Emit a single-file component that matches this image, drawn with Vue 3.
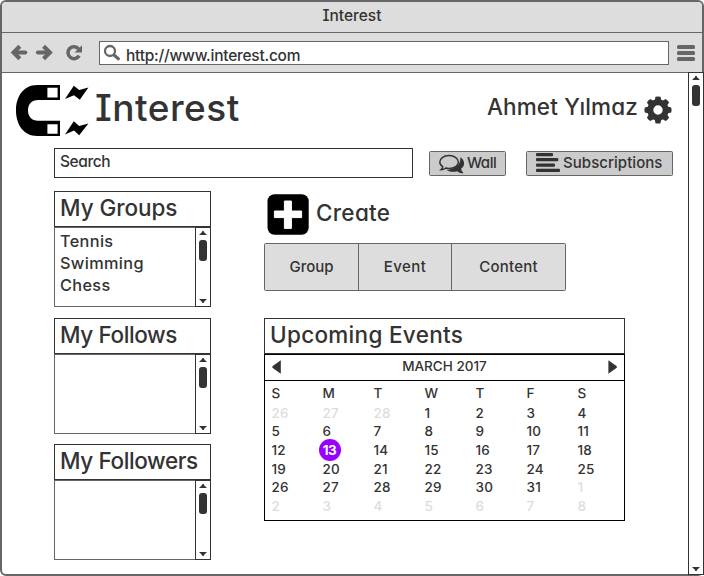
<script setup>
import { h } from 'vue'

const panels = [
  { title: 'My Groups', cls: 'groups', items: ['Tennis', 'Swimming', 'Chess'] },
  { title: 'My Follows', cls: 'follows', items: [] },
  { title: 'My Followers', cls: 'followers', items: [] },
]

const days = ['S', 'M', 'T', 'W', 'T', 'F', 'S']
const cells = [
  ...[26, 27, 28].map((n) => ({ n, out: true })),
  ...Array.from({ length: 31 }, (_, i) => ({ n: i + 1, today: i + 1 === 13 })),
  ...[1, 2, 3, 4, 5, 6, 7, 8].map((n) => ({ n, out: true })),
]

const teeth = [0, 45, 90, 135, 180, 225, 270, 315]

const arrow = (d) =>
  h('svg', { class: 'arrow', width: 8, height: 4, viewBox: '0 0 8 4' }, [h('path', { d, fill: '#333' })])
const ArrowUp = () => arrow('M0 4L2.8 1.2L3.4 0H4.6L5.2 1.2L8 4Z')
const ArrowDown = () => arrow('M0 0L2.8 2.8L3.4 4H4.6L5.2 2.8L8 0Z')
</script>

<template>
  <div class="browser">
    <header class="titlebar">Interest</header>
    <nav class="toolbar">
      <svg class="nav-icons" width="74" height="20" viewBox="10 43 74 20">
        <g fill="none" stroke="#666" stroke-width="4.2" stroke-linejoin="miter">
          <path d="M19.8 46.2L13.6 52.5L19.8 58.8" />
          <path d="M14 52.5H25.2" stroke-linecap="round" />
          <path d="M43.6 46.2L49.8 52.5L43.6 58.8" />
          <path d="M49.4 52.5H38" stroke-linecap="round" />
          <path d="M78.6 48.8A6 6 0 1 0 79.2 55.6" stroke-width="3.5" />
        </g>
        <path d="M82 45.2V52.4H74.6Z" fill="#666" />
      </svg>
      <div class="url">
        <svg width="18" height="18" viewBox="102 43 18 18">
          <circle cx="110" cy="51" r="5" fill="none" stroke="#666" stroke-width="2.3" />
          <path d="M114 55L118.3 58.7" stroke="#666" stroke-width="3.2" stroke-linecap="round" />
        </svg>
        <span>http://www.interest.com</span>
      </div>
      <div class="menu"><i></i><i></i><i></i></div>
    </nav>

    <div class="viewport">
      <main class="page">
        <div class="brandbar">
          <svg class="magnet" width="74" height="54" viewBox="15 84 74 54">
            <path d="M60 85H37C24 85 16 96 16 110.5S24 136 37 136H60V120.8H38C32 120.8 28 117 28 110.5S32 100 38 100H60Z" />
            <path d="M47.4 87.8H57.6V97.4H47.4ZM47.4 124.3H57.6V133.8H47.4Z" fill="#fff" />
            <path d="M65 99L73.8 85.7L79.2 90L88.4 87.6L79.8 99.7L74 95.3Z" />
            <path d="M65 134.4L73.8 121.3L79.2 126L88.4 123.6L79.2 135.3L74 130.4Z" />
          </svg>
          <h1>Interest</h1>
          <div class="user">Ahmet Yılmaz</div>
          <svg class="gear" width="28" height="28" viewBox="-14 -14 28 28">
            <path
              v-for="a in teeth"
              :key="a"
              d="M-3.4 -9L-2.5 -13.2Q0 -14 2.5 -13.2L3.4 -9Z"
              fill="#333"
              :transform="`rotate(${a})`"
            />
            <circle r="7.7" fill="none" stroke="#333" stroke-width="6" />
          </svg>
        </div>

        <div class="searchrow">
          <div class="search">Search</div>
          <button class="btn wall">
            <svg width="26" height="20" viewBox="438 154 26 20">
              <path d="M460.2 157.2C465.5 160.5 465 166 461.2 168.6C461.2 170.5 462.2 172 463.6 173C460.5 173.8 458 172 457.2 171.2C453 172.4 449 171.8 446 169.8C454 169.8 461.5 165 460.2 157.2Z" fill="#333" />
              <path d="M449 155.6C454.6 155.6 458.4 158.6 458.4 162.1S454.6 168.4 449 168.4C447.8 168.4 446.8 168.3 445.8 168C444.6 169 442.8 169.8 441 169.8C442 168.9 442.6 167.8 442.7 166.7C440.8 165.5 439.8 163.9 439.8 162.1C439.8 158.6 443.4 155.6 449 155.6Z" fill="#cbcbcb" stroke="#333" stroke-width="1.5" />
            </svg>
            <span>Wall</span>
          </button>
          <button class="btn subs">
            <svg width="24" height="20" viewBox="0 0 24 20" fill="#333">
              <rect width="17" height="3.2" rx="1" />
              <rect y="5" width="22.3" height="3.2" rx="1" />
              <rect y="10.6" width="19" height="3.2" rx="1" />
              <rect y="15.7" width="24" height="3.2" rx="1" />
            </svg>
            <span>Subscriptions</span>
          </button>
        </div>

        <div class="columns">
          <aside class="left">
            <section v-for="p in panels" :key="p.title" class="panel">
              <h2 :class="p.cls">{{ p.title }}</h2>
              <div class="list">
                <ul>
                  <li v-for="item in p.items" :key="item">{{ item }}</li>
                </ul>
                <div class="scroll">
                  <ArrowUp />
                  <div class="thumb"></div>
                  <ArrowDown />
                </div>
              </div>
            </section>
          </aside>

          <div class="right">
            <div class="create">
              <svg width="42" height="42" viewBox="0 0 42 42">
                <rect x=".5" y=".3" width="41.2" height="40.5" rx="7" />
                <path d="M17.4 7H24.4V17H34.6V23.6H24.4V34.4H17.4V23.6H7.4V17H17.4Z" fill="#fff" stroke="#fff" stroke-width="1" stroke-linejoin="round" />
              </svg>
              <span>Create</span>
            </div>
            <div class="tabs">
              <button class="tab-group">Group</button>
              <button class="tab-event">Event</button>
              <button class="tab-content">Content</button>
            </div>
            <section class="events">
              <h2 class="upcoming">Upcoming Events</h2>
              <div class="calendar">
                <div class="month">
                  <svg width="9" height="14" viewBox="0 0 9 14"><path d="M8.8 .3V13.7L.4 7.8V6.2Z" fill="#333" /></svg>
                  <span>MARCH 2017</span>
                  <svg width="9" height="14" viewBox="0 0 9 14"><path d="M.4 .3V13.7L8.8 7.8V6.2Z" fill="#333" /></svg>
                </div>
                <div class="grid">
                  <span v-for="(d, i) in days" :key="'d' + i" class="day">{{ d }}</span>
                  <span v-for="(c, i) in cells" :key="i" :class="{ out: c.out, today: c.today }">{{ c.n }}</span>
                </div>
              </div>
            </section>
          </div>
        </div>
      </main>

      <div class="scroll page-scroll">
        <ArrowUp />
        <div class="thumb"></div>
        <ArrowDown />
      </div>
    </div>
  </div>
</template>

<style>
body {
  background: #fff;
  overflow: hidden;
}
</style>

<style scoped>
* {
  box-sizing: border-box;
}
svg {
  display: block;
  flex: none;
}
h1,
h2,
ul {
  margin: 0;
  padding: 0;
  font-weight: inherit;
  list-style: none;
}
button {
  margin: 0;
  padding: 0;
  font: inherit;
  font-feature-settings: inherit;
  color: inherit;
}
.browser {
  display: flex;
  flex-direction: column;
  width: 704px;
  height: 576px;
  border: 2px solid #666;
  border-radius: 6px;
  background: #fff;
  color: #333;
  font-family: Inter, 'Liberation Sans', sans-serif;
  font-weight: 450;
  font-feature-settings: 'cv11', 'cv08';
  white-space: nowrap;
}
.titlebar {
  height: 31px;
  border-bottom: 1px solid #666;
  border-radius: 4px 4px 0 0;
  background: #ddd;
  text-align: center;
  font-size: 15.5px;
  line-height: 27px;
  letter-spacing: 0;
}
.toolbar {
  display: flex;
  align-items: flex-start;
  height: 40px;
  padding: 8px 7px 0 8px;
  border-bottom: 1px solid #666;
  background: #ddd;
}
.nav-icons {
  margin: 2px 15px 0 0;
}
.url {
  display: flex;
  flex: 1;
  height: 24px;
  padding: 1px 0 0 2px;
  border: 1px solid #666;
  background: #fff;
  font-size: 15.5px;
  line-height: 25px;
  letter-spacing: -0.25px;
}
.url span {
  margin-left: 6px;
}
.menu {
  display: flex;
  flex-direction: column;
  gap: 2px;
  width: 18px;
  margin: 4px 0 0 8px;
}
.menu i {
  height: 4px;
  border-radius: 1.5px;
  background: #666;
}
.viewport {
  display: flex;
  flex: 1;
  min-height: 0;
}
.page {
  flex: 1;
  min-width: 0;
}
.brandbar {
  display: flex;
  height: 75px;
  padding: 0 15px 0 13px;
}
.magnet {
  margin-top: 11px;
}
h1 {
  margin-left: 6px;
  font-size: 37px;
  line-height: 69px;
  letter-spacing: 0.5px;
}
.user {
  margin-left: auto;
  font-size: 22.5px;
  line-height: 68px;
  letter-spacing: 0.15px;
}
.gear {
  margin: 22.7px 1.5px 0 5.5px;
}
.searchrow {
  display: flex;
  height: 43px;
  padding-left: 52px;
}
.search {
  width: 359px;
  height: 30px;
  padding-left: 5px;
  border: 1px solid #333;
  font-size: 15.5px;
  line-height: 25px;
  letter-spacing: -0.4px;
}
.btn {
  display: flex;
  height: 25px;
  margin-top: 3px;
  border: 1px solid #666;
  border-radius: 1.5px;
  background: #cbcbcb;
  font-size: 15px;
  line-height: 22px;
}
.btn svg {
  margin-top: 2px;
}
.wall {
  width: 77px;
  margin-left: 16px;
  padding-left: 8px;
  letter-spacing: -0.45px;
}
.wall span {
  margin-left: 3px;
}
.subs {
  width: 147px;
  margin-left: 20px;
  padding-left: 9px;
  letter-spacing: 0.05px;
}
.subs svg {
  margin-top: 1px;
}
.subs span {
  margin-left: 3px;
}
.columns {
  display: flex;
  gap: 53px;
  padding-left: 52px;
}
.left {
  display: flex;
  flex-direction: column;
  gap: 10px;
  width: 157px;
}
h2 {
  height: 36px;
  padding-left: 5px;
  border: 1px solid #333;
  font-size: 22.5px;
  line-height: 32px;
}
.groups {
  letter-spacing: -0.05px;
}
.follows {
  letter-spacing: -0.4px;
}
.followers {
  letter-spacing: -0.4px;
}
.panel:nth-child(1) {
  margin-bottom: 1px;
}
.list {
  display: flex;
  height: 80px;
}
.list ul {
  flex: 1;
  padding: 2px 0 0 5px;
  border: solid #666;
  border-width: 1px 0 1px 1px;
  font-size: 16.3px;
  line-height: 22px;
  letter-spacing: 0.35px;
}
.scroll {
  display: flex;
  flex-direction: column;
  align-items: center;
  width: 16px;
  padding: 3px 0;
  border: 1px solid #333;
  background: #fff;
}
.thumb {
  width: 8px;
  height: 21px;
  margin: 5px 0 auto;
  border-radius: 3px;
  background: #333;
}
.page-scroll {
  margin: -1px -2px -1px 0;
}
.right {
  width: 361px;
}
.create {
  display: flex;
  height: 52px;
  padding: 3px 0 0 3px;
  font-size: 22.5px;
  line-height: 38px;
  letter-spacing: 0.3px;
}
.create span {
  margin-left: 7px;
}
.tabs {
  display: flex;
  width: 302px;
  height: 48px;
  border: 1px solid #666;
  border-radius: 1.5px;
  background: #ddd;
  font-size: 15px;
}
.tabs button {
  padding-bottom: 2px;
  border: 0;
  border-right: 1px solid #666;
  background: none;
}
.tabs .tab-group {
  width: 94px;
  letter-spacing: 0;
}
.tabs .tab-event {
  width: 93px;
  letter-spacing: 0.4px;
}
.tabs .tab-content {
  flex: 1;
  border-right: 0;
  letter-spacing: 0.25px;
}
.events {
  margin-top: 27px;
}
.upcoming {
  letter-spacing: 0.3px;
}
.calendar {
  height: 167px;
  border: 1px solid #000;
  font-size: 13.5px;
}
.month {
  display: flex;
  justify-content: space-between;
  height: 26px;
  padding: 5px 7px 0;
  border-bottom: 1px solid #000;
  letter-spacing: 0;
  line-height: 12px;
}
.grid {
  display: grid;
  grid-template-columns: repeat(7, 51px);
  grid-template-rows: 20.5px repeat(6, 18.6px);
  align-items: center;
  padding: 2px 0 0 6.5px;
  font-weight: 500;
  letter-spacing: 0.2px;
}
.day {
  font-weight: 450;
}
.out {
  color: #ddd;
}
.today {
  width: 22px;
  height: 22px;
  margin: -2px 0 -2px -4px;
  border-radius: 50%;
  background: #90f;
  color: #fff;
  font-weight: 700;
  line-height: 22px;
  text-align: center;
  letter-spacing: -0.5px;
}
</style>
